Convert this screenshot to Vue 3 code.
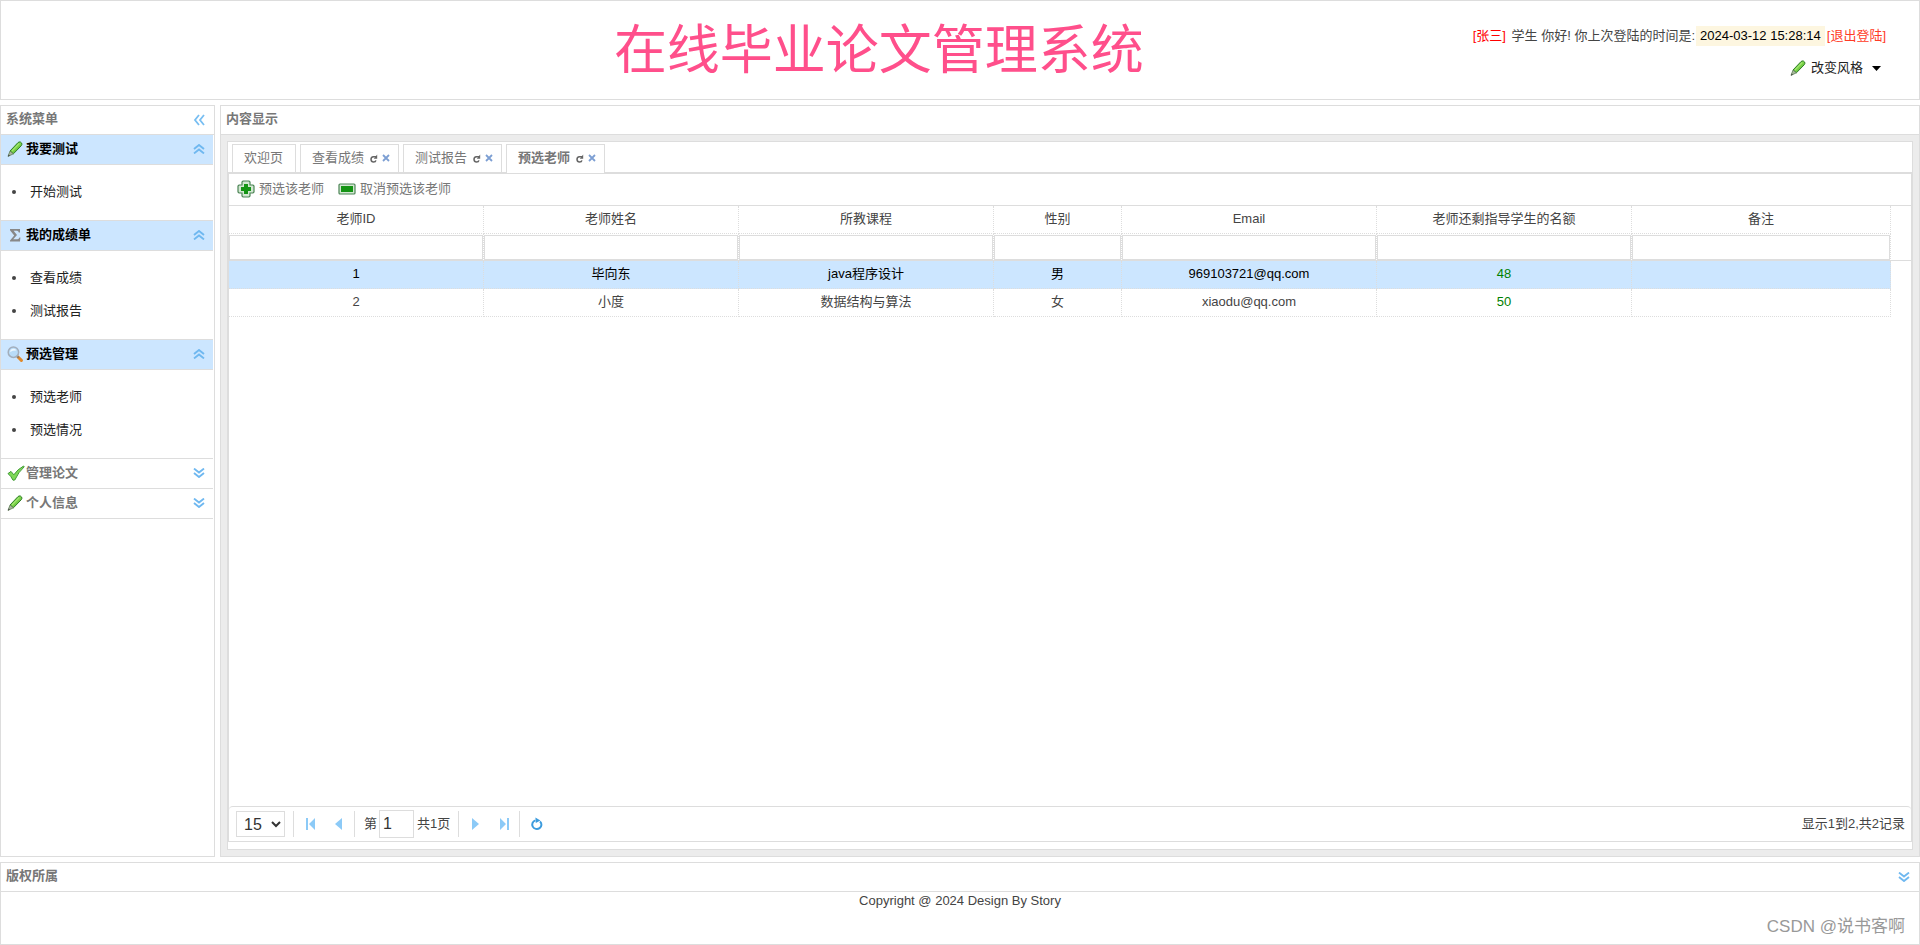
<script setup>
import { ref } from 'vue'

const menus = [
  { title: '我要测试', icon: 'pencil', open: true, items: ['开始测试'] },
  { title: '我的成绩单', icon: 'sum', open: true, items: ['查看成绩', '测试报告'] },
  { title: '预选管理', icon: 'search', open: true, items: ['预选老师', '预选情况'] },
  { title: '管理论文', icon: 'ok', open: false, items: [] },
  { title: '个人信息', icon: 'pencil', open: false, items: [] }
]

const tabs = [
  { title: '欢迎页', closable: false },
  { title: '查看成绩', closable: true },
  { title: '测试报告', closable: true },
  { title: '预选老师', closable: true, active: true }
]

const columns = [
  { key: 'id', title: '老师ID', size: 'wide' },
  { key: 'name', title: '老师姓名', size: 'wide' },
  { key: 'course', title: '所教课程', size: 'wide' },
  { key: 'sex', title: '性别', size: 'narrow' },
  { key: 'email', title: 'Email', size: 'wide' },
  { key: 'quota', title: '老师还剩指导学生的名额', size: 'wide' },
  { key: 'note', title: '备注', size: 'rest' }
]

const rows = [
  { id: 1, name: '毕向东', course: 'java程序设计', sex: '男', email: '969103721@qq.com', quota: 48, note: '' },
  { id: 2, name: '小度', course: '数据结构与算法', sex: '女', email: 'xiaodu@qq.com', quota: 50, note: '' }
]

const selected = ref(1)
const page = ref('1')
</script>

<template>
  <div class="page">
    <svg class="defs" aria-hidden="true">
      <defs>
        <linearGradient id="leaf" x1="0" y1="0" x2="1" y2="1">
          <stop offset="0" stop-color="#3c9a2c" />
          <stop offset="0.5" stop-color="#7fd64a" />
          <stop offset="1" stop-color="#2f8a22" />
        </linearGradient>
        <symbol id="pencil" viewBox="0 0 16 16">
          <path d="M3 10 L11 1.6 Q12 .6 13.4 1 L14.6 2 Q15.4 3.2 14.4 4.6 L6.4 12.8 Z" fill="url(#leaf)" stroke="#2f7f27" stroke-width="1" />
          <path d="M3 10 L6.4 12.8 L1 15.4 Z" fill="#a9b79c" stroke="#5d7d55" stroke-width=".8" />
          <path d="M1 15.6 L1.6 13.4 L3 14.7 Z" fill="#444" />
          <path d="M5 9.8 L12.3 2.4" stroke="#a4e673" stroke-width="1.2" />
        </symbol>
        <symbol id="sum" viewBox="0 0 16 16">
          <path d="M3 2 H13 V5.4 H11.8 Q11.5 3.8 10 3.8 H6.6 L10 8 L6.2 12.2 H10.4 Q12 12.2 12.4 10.4 H13.4 L13 14.6 H3 V13.4 L7.2 8.6 L3 3.2 Z" fill="#888" />
        </symbol>
        <symbol id="search" viewBox="0 0 16 16">
          <path d="M10.8 10.8 L14.4 14.4" stroke="#e08a2c" stroke-width="3" stroke-linecap="round" />
          <path d="M9.8 9.8 L11.6 11.6" stroke="#777" stroke-width="1.6" />
          <circle cx="6.4" cy="6.2" r="5.2" fill="#b9dcf8" stroke="#a3aebb" stroke-width="1.5" />
          <path d="M3 6 Q3.4 2.9 6.6 2.8 Q8.8 2.8 9.4 4.6 Q6 4.4 3 6Z" fill="#eef8ff" />
        </symbol>
        <symbol id="ok" viewBox="0 0 18 16">
          <path d="M1 8.6 L4 6.4 L6.8 9.8 Q10.6 4.2 16.6 1 L17.2 1.8 Q11.4 7 7.8 15 L6 15.2 Q4 11 1 8.6Z" fill="#7ed957" stroke="#3f9a35" stroke-width="1" />
        </symbol>
        <symbol id="fold" viewBox="0 0 12 10">
          <path d="M1 5 L6 1 L11 5 M1 9.4 L6 5.4 L11 9.4" fill="none" stroke="#6fb8f0" stroke-width="1.9" />
        </symbol>
        <symbol id="unfold" viewBox="0 0 12 10">
          <path d="M1 .6 L6 4.6 L11 .6 M1 5 L6 9 L11 5" fill="none" stroke="#6fb8f0" stroke-width="1.9" />
        </symbol>
        <symbol id="left" viewBox="0 0 12 12">
          <path d="M6 1 L2 6 L6 11 M11 1 L7 6 L11 11" fill="none" stroke="#78bef2" stroke-width="1.8" />
        </symbol>
        <symbol id="add" viewBox="0 0 18 18">
          <path d="M6 1 H12 L13 2 V5 H16 L17 6 V12 L16 13 H13 V16 L12 17 H6 L5 16 V13 H2 L1 12 V6 L2 5 H5 V2 Z" fill="#d3e8d2" stroke="#4b8455" stroke-width="1.2" />
          <path d="M7 4 H11 V7 H14 V11 H11 V14 H7 V11 H4 V7 H7 Z" fill="#149414" />
        </symbol>
        <symbol id="remove" viewBox="0 0 18 18">
          <rect x="1" y="4" width="16" height="10" rx="1" fill="#d3e8d2" stroke="#4b8455" stroke-width="1.2" />
          <rect x="3" y="6" width="12" height="6" fill="#149414" />
        </symbol>
        <symbol id="reload" viewBox="0 0 8 9">
          <path d="M6.2 2.8 H3.4 Q1 3 1 5.4 Q1.2 8 3.6 8 Q5.6 8 5.9 6.4" fill="none" stroke="#666" stroke-width="1.5" />
          <path d="M7.2 .6 V4.8 H3.8 Z" fill="#666" />
        </symbol>
        <symbol id="close" viewBox="0 0 8 8">
          <path d="M1 1 L7 7 M7 1 L1 7" stroke="#7d9fd3" stroke-width="1.8" />
        </symbol>
      </defs>
    </svg>

    <header class="top">
      <h1>在线毕业论文管理系统</h1>
      <div class="user">
        <p>
          <span class="who">[张三]</span> 学生 你好! 你上次登陆的时间是:<time>2024-03-12 15:28:14</time>
          <a href="#" class="logout">[退出登陆]</a>
        </p>
        <button type="button" class="theme">
          <svg class="i16"><use href="#pencil" /></svg>
          <span>改变风格</span>
          <svg class="caret" viewBox="0 0 9 5"><path d="M0 0 H9 L4.5 5 Z" fill="#000" /></svg>
        </button>
      </div>
    </header>

    <div class="middle">
      <aside class="panel side">
        <div class="bar">
          <h2>系统菜单</h2>
          <button type="button" aria-label="折叠"><svg class="i12"><use href="#left" /></svg></button>
        </div>
        <nav>
          <section v-for="m in menus" :key="m.title">
            <button type="button" class="group" :class="{ open: m.open }">
              <svg class="i16" :class="{ w18: m.icon === 'ok' }"><use :href="'#' + m.icon" /></svg>
              <span>{{ m.title }}</span>
              <svg class="arrow"><use :href="m.open ? '#fold' : '#unfold'" /></svg>
            </button>
            <ul v-if="m.open">
              <li v-for="i in m.items" :key="i"><a href="#">{{ i }}</a></li>
            </ul>
          </section>
        </nav>
      </aside>

      <main class="panel content">
        <div class="bar"><h2>内容显示</h2></div>
        <div class="body">
          <div class="box">
            <ul class="tabs">
              <li v-for="t in tabs" :key="t.title" :class="{ active: t.active }">
                <a href="#">{{ t.title }}</a>
                <template v-if="t.closable">
                  <button type="button" aria-label="刷新"><svg class="reload"><use href="#reload" /></svg></button>
                  <button type="button" aria-label="关闭"><svg class="close"><use href="#close" /></svg></button>
                </template>
              </li>
            </ul>
            <div class="grid">
              <div class="tools">
                <button type="button"><svg class="i18"><use href="#add" /></svg>预选该老师</button>
                <button type="button"><svg class="i18"><use href="#remove" /></svg>取消预选该老师</button>
              </div>
              <div class="view">
                <table>
                  <colgroup>
                    <col v-for="c in columns" :key="c.key" :class="c.size" />
                    <col class="gutter" />
                  </colgroup>
                  <thead>
                    <tr>
                      <th v-for="c in columns" :key="c.key" scope="col">{{ c.title }}</th>
                      <td class="gutter"></td>
                    </tr>
                    <tr class="filter">
                      <td v-for="c in columns" :key="c.key"><input type="text" :aria-label="c.title" /></td>
                      <td class="gutter"></td>
                    </tr>
                  </thead>
                  <tbody>
                    <tr v-for="r in rows" :key="r.id" :class="{ selected: r.id === selected }" @click="selected = r.id">
                      <td v-for="c in columns" :key="c.key" :class="c.key">{{ r[c.key] }}</td>
                      <td class="gutter"></td>
                    </tr>
                  </tbody>
                </table>
              </div>
              <div class="pager">
                <select aria-label="每页条数"><option>15</option><option>30</option></select>
                <i class="sep"></i>
                <button type="button" aria-label="首页"><svg viewBox="0 0 12 12"><path d="M1 0 H3 V12 H1 Z M10 0 V12 L4 6 Z" fill="#8ccaf7" /></svg></button>
                <button type="button" aria-label="上一页"><svg viewBox="0 0 12 12"><path d="M9 0 V12 L2 6 Z" fill="#8ccaf7" /></svg></button>
                <i class="sep"></i>
                <label for="page">第</label>
                <input id="page" v-model="page" type="text" />
                <span class="total">共1页</span>
                <i class="sep"></i>
                <button type="button" aria-label="下一页"><svg viewBox="0 0 12 12"><path d="M2 0 V12 L9 6 Z" fill="#8ccaf7" /></svg></button>
                <button type="button" aria-label="末页"><svg viewBox="0 0 12 12"><path d="M9 0 H11 V12 H9 Z M2 0 V12 L8 6 Z" fill="#8ccaf7" /></svg></button>
                <i class="sep"></i>
                <button type="button" aria-label="刷新">
                  <svg viewBox="0 0 12 12">
                    <path d="M9 3.4 A4.6 4.4 0 1 1 4.4 2.4" fill="none" stroke="#3c9bdd" stroke-width="2" />
                    <path d="M4.4 -.4 L9.4 2.4 L4.8 5 Z" fill="#3c9bdd" />
                  </svg>
                </button>
                <span class="info">显示1到2,共2记录</span>
              </div>
            </div>
          </div>
        </div>
      </main>
    </div>

    <footer class="panel foot">
      <div class="bar">
        <h2>版权所属</h2>
        <button type="button" aria-label="展开"><svg class="arrow"><use href="#unfold" /></svg></button>
      </div>
      <p>Copyright @ 2024 Design By Story</p>
      <span class="mark">CSDN @说书客啊</span>
    </footer>
  </div>
</template>

<style>
body {
  margin: 0;
  background: #fff;
}
</style>

<style scoped>
.page {
  display: flex;
  flex-direction: column;
  gap: 5px;
  min-height: 100vh;
  color: #444;
  font: 13px/20px "Liberation Sans", "Noto Sans CJK SC", sans-serif;
}
.page * {
  box-sizing: border-box;
}
.defs {
  position: absolute;
  width: 0;
  height: 0;
}
h1, h2, p, ul {
  margin: 0;
  padding: 0;
}
ul {
  list-style: none;
}
a {
  color: #222;
  text-decoration: none;
}
button {
  display: inline-flex;
  align-items: center;
  padding: 0;
  border: 0;
  background: none;
  color: inherit;
  font: inherit;
  cursor: pointer;
}
svg {
  display: block;
  flex: none;
}
.i12 { width: 12px; height: 12px; }
.i16 { width: 16px; height: 16px; }
.i18 { width: 18px; height: 18px; }
.w18 { width: 18px; }
.arrow { width: 12px; height: 10px; }

.top {
  display: flex;
  height: 100px;
  border: 1px solid #ddd;
}
h1 {
  flex: 1;
  padding-left: 284px;
  color: #ff4f8b;
  font-size: 53px;
  font-weight: 400;
  line-height: 100px;
  text-align: center;
  white-space: nowrap;
}
.user {
  display: flex;
  flex-direction: column;
  gap: 12px;
  align-items: flex-end;
  padding: 25px 33px 0 0;
}
.user p {
  white-space: nowrap;
}
.who { color: #f00; }
.logout { color: #ff3b26; }
time {
  display: inline-block;
  margin: 0 2px 0 1px;
  padding: 0 4px;
  background: #fdf6e0;
  color: #000;
}
.who {
  margin-right: 2px;
}
.theme {
  gap: 5px;
  height: 20px;
  margin-right: 5px;
  color: #222;
}
.caret {
  width: 9px;
  height: 5px;
  margin-left: 4px;
}

.middle {
  display: flex;
  flex: 1;
  gap: 5px;
}
.panel {
  border: 1px solid #ddd;
}
.bar {
  display: flex;
  align-items: center;
  justify-content: space-between;
  height: 29px;
  padding: 0 9px 0 5px;
  border-bottom: 1px solid #ddd;
}
h2 {
  padding-bottom: 2px;
  color: #777;
  font-size: 13px;
  font-weight: 700;
}
.side {
  width: 215px;
}
nav {
  padding-right: 1px;
}
.group {
  display: flex;
  width: 100%;
  height: 30px;
  padding: 0 8px 1px 6px;
  border-bottom: 1px solid #ddd;
  color: #777;
  font-weight: 700;
}
.group.open {
  background: #cce6ff;
  color: #000;
}
.group span {
  flex: 1;
  margin-left: 3px;
  text-align: left;
}
.group .w18 + span {
  margin-left: 1px;
}
nav ul {
  display: grid;
  gap: 12px;
  padding: 16px 0 18px;
  border-bottom: 1px solid #ddd;
}
nav li {
  display: flex;
  align-items: center;
  height: 21px;
  padding-left: 11px;
}
nav li::before {
  width: 4px;
  height: 4px;
  margin-right: 14px;
  border-radius: 50%;
  background: #444;
  content: "";
}

.content {
  display: flex;
  flex: 1;
  flex-direction: column;
  min-width: 0;
  background: #ececec;
}
.content .bar {
  background: #fff;
}
.body {
  display: flex;
  flex: 1;
  padding: 6px;
}
.box {
  display: flex;
  flex: 1;
  flex-direction: column;
  min-width: 0;
  padding-bottom: 7px;
  border: 1px solid #ddd;
  background: #fff;
}
.tabs {
  display: flex;
  gap: 4px;
  height: 31px;
  padding: 2px 4px 0;
  border-bottom: 1px solid #ddd;
}
.tabs li {
  display: flex;
  align-items: center;
  height: 28px;
  padding: 0 12px 1px 11px;
  border: 1px solid #ddd;
  border-bottom: 0;
}
.tabs li.active {
  height: 30px;
  padding-bottom: 3px;
  background: #fff;
}
.tabs li:has(button) {
  padding-right: 8px;
}
.tabs a {
  color: #777;
}
.tabs .active a {
  font-weight: 700;
}
.reload {
  width: 8px;
  height: 9px;
  margin-left: 6px;
}
.close {
  width: 8px;
  height: 8px;
  margin-left: 4px;
}
.grid {
  display: flex;
  flex: 1;
  flex-direction: column;
  border: 1px solid #ddd;
}
.tools {
  display: flex;
  gap: 14px;
  height: 32px;
  padding: 0 8px 2px;
  border-bottom: 1px solid #ddd;
  color: #777;
}
.tools button {
  gap: 4px;
}
.view {
  flex: 1;
}
table {
  width: 100%;
  border-spacing: 0;
  table-layout: fixed;
}
col.wide { width: 15.16%; }
col.narrow { width: 7.61%; }
col.gutter { width: 20px; }
th, td {
  height: 28px;
  padding: 0 0 2px;
  overflow: hidden;
  border: 1px dotted #ddd;
  border-width: 0 1px 1px 0;
  font-weight: 400;
  text-align: center;
}
th {
  height: 27px;
}
.filter td {
  height: 27px;
  padding: 0;
  border-bottom: 1px solid #ddd;
}
.filter input {
  display: block;
  width: 100%;
  height: 25px;
  border: 1px solid #ddd;
  background: #fff;
}
td.gutter {
  border-width: 0;
}
.filter td.gutter {
  border-bottom-width: 1px;
}
.selected td:not(.gutter) {
  background: #cce6ff;
  color: #000;
}
tbody .quota, .selected td.quota:not(.gutter) {
  color: #008000;
}
.pager {
  display: flex;
  align-items: center;
  height: 35px;
  padding: 0 6px 0 7px;
  border-top: 1px solid #ddd;
  border-radius: 4px 4px 0 0;
}
.pager select {
  width: 49px;
  height: 26px;
  padding: 0 0 0 3px;
  border: 1px solid #ddd;
  border-radius: 0;
  background: #fff;
  color: #333;
  font: 16px "Liberation Sans", sans-serif;
}
.sep {
  width: 1px;
  height: 26px;
  margin: 0 8px;
  background: #ddd;
}
.pager button {
  justify-content: center;
  width: 26px;
  height: 26px;
}
.pager button + button {
  margin-left: 2px;
}
.pager button svg {
  width: 12px;
  height: 12px;
  overflow: visible;
}
.pager button + .sep {
  margin-left: 2px;
}
.pager .sep + button {
  margin-left: -4px;
}
.pager label {
  margin: 0 2px 0 1px;
}
.pager input {
  width: 35px;
  height: 28px;
  padding: 0 3px;
  border: 1px solid #ddd;
  color: #333;
  font: 16px "Liberation Sans", sans-serif;
}
.total {
  margin-left: 3px;
}
.info {
  margin-left: auto;
}

.foot {
  position: relative;
  height: 83px;
}
.foot p {
  margin-top: -1px;
  text-align: center;
}
.mark {
  position: absolute;
  right: 14px;
  bottom: 5px;
  color: #999;
  font-size: 17px;
  line-height: 24px;
}
</style>
